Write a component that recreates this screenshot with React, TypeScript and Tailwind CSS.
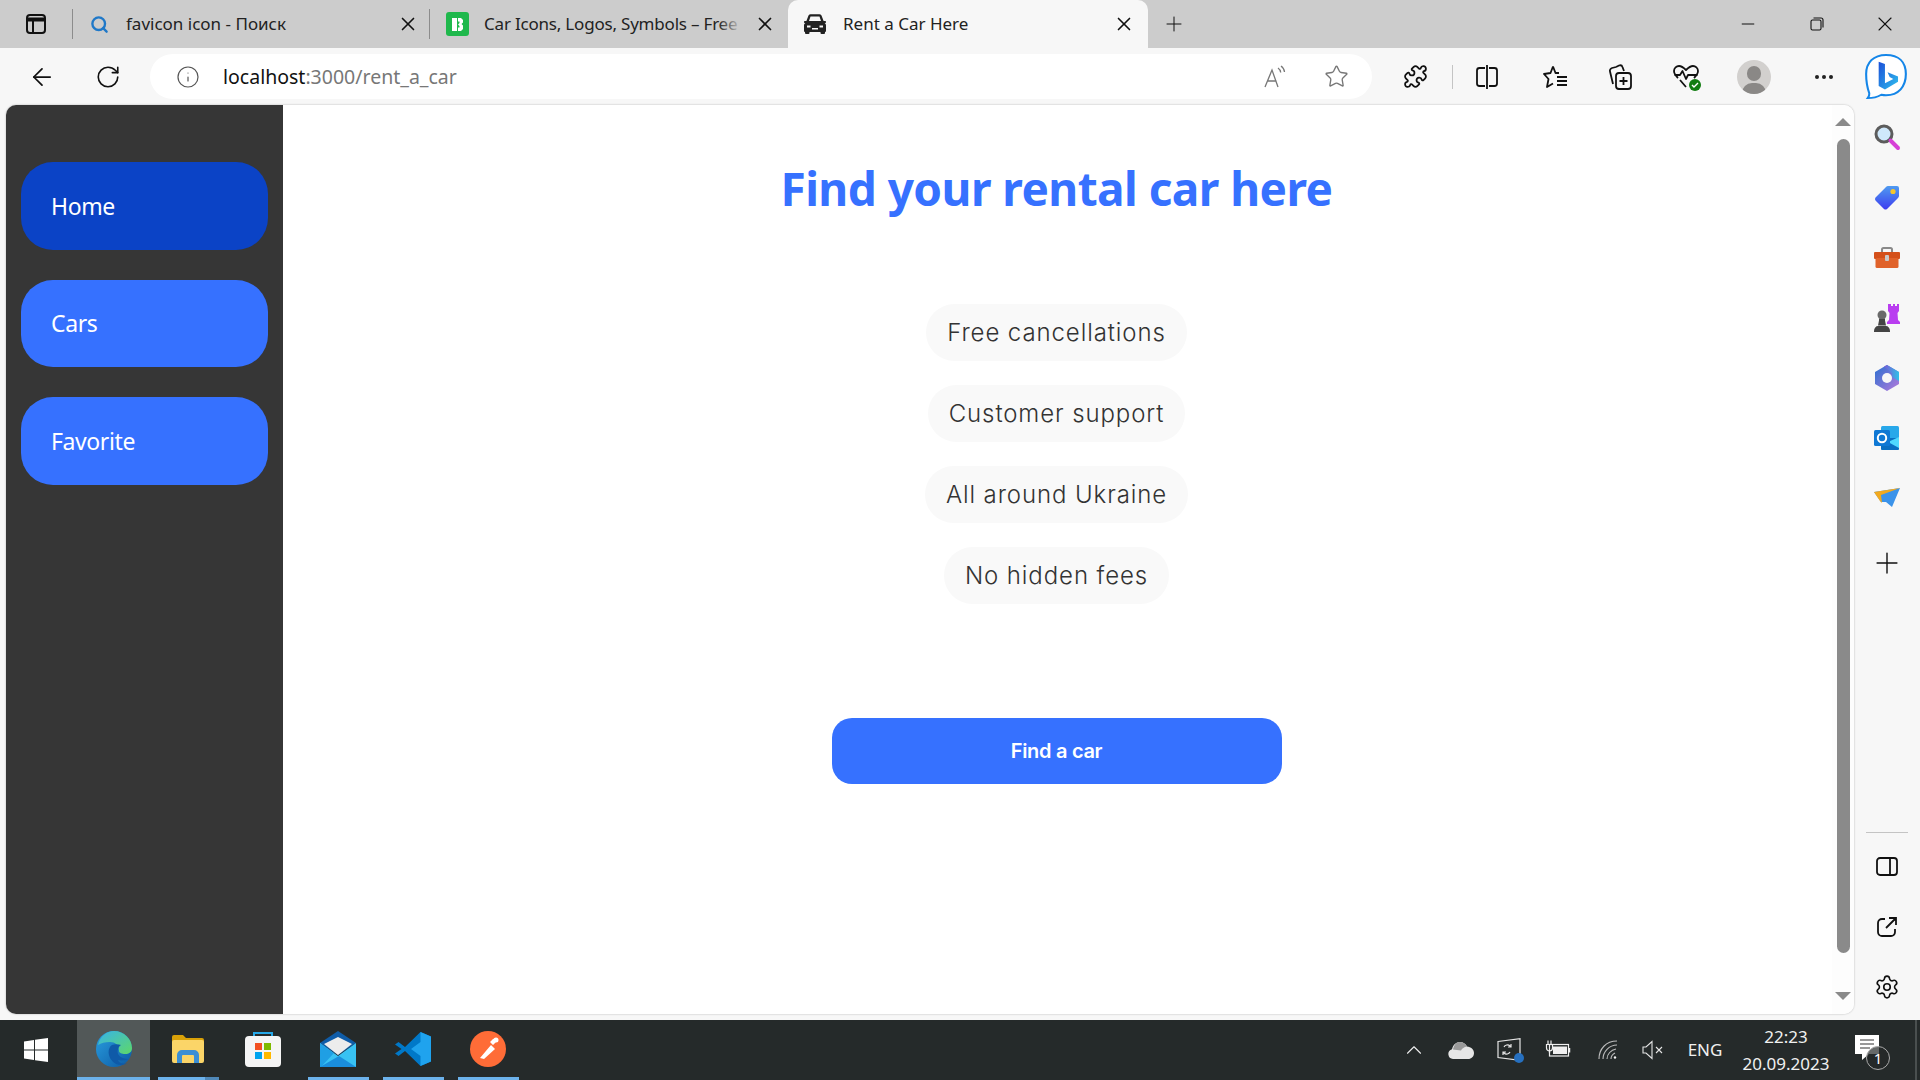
import { ArrowLeft, RotateCw, Info, Star, X, Plus, Minus, Search, ChevronUp, Settings, Puzzle } from 'lucide-react';
import type { ReactNode } from 'react';

const SEGOE = 'font-["Noto_Sans",sans-serif]';

// 사이드바 메뉴
const NAV_ITEMS = [
  { label: 'Home', active: true },
  { label: 'Cars', active: false },
  { label: 'Favorite', active: false },
];

const PERKS = ['Free cancellations', 'Customer support', 'All around Ukraine', 'No hidden fees'];

function Cell({ className = '', children }: { className?: string; children: ReactNode }) {
  return <div className={`flex items-center justify-center shrink-0 ${className}`}>{children}</div>;
}

function TabStripIcon() {
  return (
    <svg width="22" height="22" viewBox="0 0 22 22" fill="none" stroke="#111" strokeWidth="2">
      <rect x="2" y="2" width="18" height="18" rx="3" />
      <path d="M2 6.500h18" strokeWidth="4" />
      <path d="M8 7v13" />
    </svg>
  );
}

function CarFavicon() {
  return (
    <svg width="24" height="20" viewBox="0 0 24 20" fill="#222">
      <path d="M5.500 1.500C6 .7 6.800.3 7.600.3h8.800c.8 0 1.600.4 2.100 1.200L20.600 7H22c.6 0 1 .4 1 1s-.4 1-1 1h-.4c.9.6 1.400 1.500 1.400 2.600V17a1 1 0 0 1-1 1v1a1 1 0 0 1-1 1h-2.500a1 1 0 0 1-1-1v-1H6.500v1a1 1 0 0 1-1 1H3a1 1 0 0 1-1-1v-1a1 1 0 0 1-1-1v-5.400C1 10.500 1.500 9.600 2.400 9H2C1.400 9 1 8.600 1 8s.4-1 1-1h1.400L5.500 1.500zM7.500 2.500 6 7h12l-1.500-4.500h-9zM4 11.500v2h3.500v-2H4zm12.500 0v2H20v-2h-3.500zM9 14v1.500h6V14H9z" fillRule="evenodd" />
    </svg>
  );
}

function GreenFavicon() {
  return (
    <div className="w-[23px] h-[24px] rounded-[3px] bg-[#1fb84c] flex items-center justify-center">
      <svg width="13" height="15" viewBox="0 0 13 15" fill="#fff">
        <path d="M1 1h5v13H1zM7 1h3l2 2v2.500l-1.500 1.500L12 8.500V12l-2 2H7v-3.500h1.500V9L7 7.500 8.500 6V4.500H7z" />
      </svg>
    </div>
  );
}

function ReadAloudIcon() {
  return (
    <svg width="24" height="24" viewBox="0 0 24 24" fill="none" stroke="#777" strokeWidth="1.300">
      <path d="M2 22 9 5l6 17M4.500 16h9" />
      <path d="M15 3c1.500 1 2.500 2.500 2.700 4.500M18 1c2 1.500 3.300 3.500 3.500 6" />
    </svg>
  );
}

function SplitIcon() {
  return (
    <svg width="24" height="26" viewBox="0 0 24 26" fill="none" stroke="#111" strokeWidth="1.800">
      <path d="M10 4H4.500A2.500 2.500 0 0 0 2 6.500v13A2.500 2.500 0 0 0 4.500 22H10M14 4h5.500A2.500 2.500 0 0 1 22 6.500v13a2.500 2.500 0 0 1-2.500 2.500H14M12 1v24" />
    </svg>
  );
}

function FavoritesIcon() {
  return (
    <svg width="26" height="26" viewBox="0 0 26 26" fill="none" stroke="#111" strokeWidth="1.800" strokeLinejoin="round">
      <path d="M11 2.500 13.500 9H17M11 2.500 8.500 9 2 10l4.500 5-1.500 8 6-3.500" />
      <path d="M15 13h10M15 17h10M15 21h10" />
    </svg>
  );
}

function CollectionsIcon() {
  return (
    <svg width="26" height="28" viewBox="0 0 26 28" fill="none" stroke="#111" strokeWidth="1.800" strokeLinejoin="round">
      <rect x="9" y="10" width="15" height="16" rx="3" />
      <path d="M16.500 14v8M12.500 18h8" />
      <path d="M9 4 5 5c-1.500.5-2.500 2-2 3.500L6 21M9 4l3-1.500c1.500-.5 3 0 3.500 1.500l1.500 4" />
    </svg>
  );
}

function HeartPulseIcon() {
  return (
    <div className="relative w-[26px] h-[28px]">
      <svg width="26" height="26" viewBox="0 0 26 26" fill="none" stroke="#111" strokeWidth="1.800" strokeLinejoin="round">
        <path d="M5 15C2.500 12.500 1 11 1 8c0-3 2.500-5 5-5 2.500 0 4.500 1.500 7 4 2.500-2.500 4.500-4 7-4 2.500 0 5 2 5 5 0 3-1.500 4.500-4 7" />
        <path d="M1.500 12H7l2.500-4 3.500 8 2-4h9.500M7 17l6 7" />
      </svg>
      <div className="absolute right-[-2px] bottom-0 w-[12px] h-[12px] rounded-full bg-[#107c10] flex items-center justify-center">
        <svg width="8" height="8" viewBox="0 0 8 8" fill="none" stroke="#fff" strokeWidth="1.400"><path d="m1 4 2 2 4-4" /></svg>
      </div>
    </div>
  );
}

function AvatarIcon() {
  return (
    <div className="relative w-[34px] h-[34px] rounded-full bg-[#d2d0ce] overflow-hidden">
      <div className="absolute left-[10px] top-[6px] w-[14px] h-[15px] rounded-full bg-[#8a8886]" />
      <div className="absolute left-[5px] top-[23px] w-[24px] h-[20px] rounded-full bg-[#8a8886]" />
    </div>
  );
}

function BingIcon() {
  return (
    <svg width="46" height="48" viewBox="0 0 44 50" fill="none" preserveAspectRatio="none">
      <defs>
        <linearGradient id="bingB" x1="0" y1="0" x2="1" y2="1">
          <stop offset="0" stopColor="#1b4fd8" />
          <stop offset="1" stopColor="#2fc0ee" />
        </linearGradient>
      </defs>
      <path d="M22 2C10 2 3 10 3 22c0 8 1 14 3 20 .3 2-.5 3.500-1.500 5 5 0 9-1 13-3.500 1.500.3 3 .5 4.500.5 12 0 19-9 19-22S34 2 22 2z" fill="#fff" stroke="#1586e8" strokeWidth="2" />
      <path d="M15 9l6 2.500v20l8-4.500-3.500-2-2-5 10 4.500v5.500L21 38l-6-3.500z" fill="url(#bingB)" />
    </svg>
  );
}

function SearchToolIcon() {
  return (
    <svg width="28" height="28" viewBox="0 0 28 28" fill="none">
      <circle cx="11" cy="11" r="8" fill="#cfe8fb" stroke="#5c5c5c" strokeWidth="3" />
      <path d="M17.500 17.500 25 25" stroke="#d63fd6" strokeWidth="4" strokeLinecap="round" />
    </svg>
  );
}

function TagIcon() {
  return (
    <svg width="28" height="28" viewBox="0 0 28 28">
      <defs>
        <linearGradient id="tagG" x1="0" y1="0" x2="0" y2="1">
          <stop offset="0" stopColor="#4f9bf0" />
          <stop offset="1" stopColor="#3d3df0" />
        </linearGradient>
      </defs>
      <path d="M15 3h9a2 2 0 0 1 2 2v8a3 3 0 0 1-1 2L14 26a2.500 2.500 0 0 1-3 0l-8.500-8.500a2.500 2.500 0 0 1 0-3L13 4a3 3 0 0 1 2-1z" fill="url(#tagG)" />
      <circle cx="20" cy="8.500" r="2.600" fill="#f6c62c" />
    </svg>
  );
}

function ToolboxIcon() {
  return (
    <svg width="28" height="28" viewBox="0 0 28 28">
      <path d="M9 9V5.500A1.500 1.500 0 0 1 10.500 4h7A1.500 1.500 0 0 1 19 5.500V9" fill="none" stroke="#8a8a8a" strokeWidth="2" />
      <rect x="1" y="8" width="26" height="7" rx="1" fill="#d4501a" />
      <rect x="2.500" y="14" width="23" height="10" rx="1.500" fill="#e0622a" />
      <rect x="12" y="11" width="4" height="6" rx="1" fill="#c9c9c9" />
    </svg>
  );
}

function ChessIcon() {
  return (
    <svg width="30" height="30" viewBox="0 0 30 30">
      <path d="M18 2h2v2h2V2h2v2h2V2h2v7l-1.500 2 .5 7 2 2v2H16v-2l2-2 .5-7L17 9V2z" fill="#b93df0" transform="translate(-1 -1)" />
      <circle cx="10" cy="12" r="4.500" fill="#6a6a6a" />
      <path d="M7 16h6v1.500l1 5H6l1-5zM2 28c0-3 2-5 4-5h8c2 0 4 2 4 5v1H2z" fill="#444" />
    </svg>
  );
}

function M365Icon() {
  return (
    <svg width="28" height="28" viewBox="0 0 28 28">
      <defs>
        <linearGradient id="msA" x1="0" y1="0" x2="1" y2="0">
          <stop offset="0" stopColor="#7a5ad6" />
          <stop offset="1" stopColor="#2fc0e8" />
        </linearGradient>
        <linearGradient id="msB" x1="0" y1="0" x2="1" y2="1">
          <stop offset="0" stopColor="#2a6fd0" />
          <stop offset="1" stopColor="#b57bdc" />
        </linearGradient>
      </defs>
      <path d="M14 1 26 8v12l-12 7-12-7V8z" fill="url(#msB)" />
      <path d="M11 2.500 14 1l12 7v9l-7-4V9.500z" fill="url(#msA)" />
      <circle cx="14" cy="14" r="5" fill="#f7f7f7" />
    </svg>
  );
}

function OutlookIcon() {
  return (
    <svg width="28" height="28" viewBox="0 0 28 28">
      <rect x="8" y="2" width="18" height="24" rx="1.500" fill="#28a8ea" />
      <path d="M8 14h18v10.500a1.500 1.500 0 0 1-1.500 1.500h-15A1.500 1.500 0 0 1 8 24.500z" fill="#0a6fc2" />
      <path d="M26 13v11L15 18z" fill="#50d9ff" />
      <rect x="1" y="6" width="16" height="16" rx="1.500" fill="#0f78d4" />
      <circle cx="9" cy="14" r="4.200" fill="none" stroke="#fff" strokeWidth="2" />
    </svg>
  );
}

function PlaneIcon() {
  return (
    <svg width="28" height="24" viewBox="0 0 28 24">
      <path d="M1 7 27 3 19 22l-6-5-5 0z" fill="#3b93ea" />
      <path d="M1 7 27 3 8 10l1 8-2-2z" fill="#f2a91e" />
    </svg>
  );
}

function PanelIcon() {
  return (
    <svg width="24" height="22" viewBox="0 0 24 22" fill="none" stroke="#111" strokeWidth="1.800">
      <rect x="2" y="2" width="20" height="17" rx="3" />
      <path d="M15 2v17" />
    </svg>
  );
}

function PopOutIcon() {
  return (
    <svg width="22" height="22" viewBox="0 0 22 22" fill="none" stroke="#111" strokeWidth="1.800">
      <path d="M9 3H6a4 4 0 0 0-4 4v9a4 4 0 0 0 4 4h9a4 4 0 0 0 4-4v-3M10 12 20 2M13 2h7v7" />
    </svg>
  );
}

function WindowsLogo() {
  return (
    <svg width="24" height="24" viewBox="0 0 24 24" fill="#fff">
      <path d="M0 3.500 10 2v9.500H0zM11 1.800 24 0v11.500H11zM0 12.500h10V22L0 20.600zM11 12.500h13V24l-13-1.800z" />
    </svg>
  );
}

function EdgeLogo() {
  return (
    <svg width="36" height="36" viewBox="0 0 36 36">
      <defs>
        <linearGradient id="edgeA" x1="0" y1="0" x2="1" y2="1">
          <stop offset="0" stopColor="#2a9fe0" />
          <stop offset="1" stopColor="#0c59a4" />
        </linearGradient>
        <linearGradient id="edgeB" x1="0" y1="0" x2="1" y2="1">
          <stop offset="0" stopColor="#38b3e8" />
          <stop offset="1" stopColor="#5ed868" />
        </linearGradient>
      </defs>
      <circle cx="18" cy="18" r="18" fill="url(#edgeA)" />
      <path d="M2 14C4 5 11 0 18 0c10 0 18 8 18 17 0 4-3 6-7 6-3 0-6-1-6-3 0-6-4-9-9-9-5 0-9 1-12 3z" fill="url(#edgeB)" />
      <path d="M16 14c-3 2-4 6-3 10 1 5 6 10 12 10 2 0 4-.5 6-2-3 1-8 1-9-3 4 1 8 0 11-1-4 0-9-1-11-5-1-3 0-7 3-9-3-1-6-1-9 0z" fill="#0f5aa8" />
    </svg>
  );
}

function FolderLogo() {
  return (
    <svg width="32" height="28" viewBox="0 0 32 28">
      <path d="M0 2a2 2 0 0 1 2-2h9l3 3h16a2 2 0 0 1 2 2v3H0z" fill="#d9a108" />
      <rect y="5" width="32" height="23" rx="2" fill="#fbd568" />
      <path d="M5 28V20a5 5 0 0 1 5-5h12a5 5 0 0 1 5 5v8h-5v-7a1 1 0 0 0-1-1H11a1 1 0 0 0-1 1v7z" fill="#3c8fd4" />
    </svg>
  );
}

function StoreLogo() {
  return (
    <svg width="36" height="36" viewBox="0 0 36 36">
      <path d="M9 5V2h18v3" fill="none" stroke="#25a8e8" strokeWidth="2" />
      <rect y="5" width="36" height="31" rx="4" fill="#f5f5f5" />
      <rect x="10" y="12" width="7" height="7" fill="#f25022" />
      <rect x="19" y="12" width="7" height="7" fill="#7fba00" />
      <rect x="10" y="21" width="7" height="7" fill="#00a4ef" />
      <rect x="19" y="21" width="7" height="7" fill="#ffb900" />
    </svg>
  );
}

function MailLogo() {
  return (
    <svg width="36" height="36" viewBox="0 0 36 36">
      <path d="M0 12 18 0l18 12-18 12z" fill="#0f5ca8" />
      <path d="M4 13 18 6l14 7-14 11z" fill="#ececec" />
      <path d="M0 12l18 13L36 12v24H0z" fill="#38c2f3" />
      <path d="M0 12v24h1l13-14z" fill="#1f9fe4" />
      <path d="M0 36 19 25l17 11z" fill="#1a8edc" />
    </svg>
  );
}

function VsCodeLogo() {
  return (
    <svg width="36" height="36" viewBox="0 0 36 36">
      <path d="M25.500 1 36 5.500v25L25.500 35 10 20l-6.500 5L0 22.500 6.500 18 0 13.500 3.500 11l6.500 5z" fill="#0078c8" />
      <path d="M25.500 1 36 5.500v25L25.500 35V25L16 18l9.500-7z" fill="#1fa3ee" />
    </svg>
  );
}

function PostmanLogo() {
  return (
    <svg width="36" height="36" viewBox="0 0 36 36">
      <circle cx="18" cy="18" r="18" fill="#ff6c37" />
      <path d="M10 27 21 14l4 4-11 10zM23 8l4-1-1 4-3 3-3-3z" fill="#fff" />
      <circle cx="26" cy="9" r="2.500" fill="#fff" />
    </svg>
  );
}

function OneDriveIcon() {
  return (
    <svg width="26" height="18" viewBox="0 0 26 18">
      <path d="M5 18a5 5 0 0 1-1-9.800C5 4 8 1 12 1c3 0 5.500 1.500 7 4.500 4 .3 7 3 7 6.500s-2.500 6-6 6z" fill="#e6e6e6" />
      <path d="M12 1c3 0 5.500 1.500 7 4.500-3 .5-5 2-6 4L5 8.500C6 4 8 1 12 1z" fill="#9a9a9a" />
    </svg>
  );
}

function SyncTrayIcon() {
  return (
    <div className="relative w-[26px] h-[24px]">
      <svg width="24" height="23" viewBox="0 0 24 23" fill="none" stroke="#e6e6e6" strokeWidth="1.200">
        <path d="M1 3.500 23 .7v21.600L1 19.500zM7 9c1-2 4-3 6-1l1 1M14 6v3h-3M13 14c-1 2-4 3-6 1l-1-1M6 17v-3h3" />
      </svg>
      <div className="absolute right-[-1px] bottom-[-1px] w-[10px] h-[10px] rounded-full bg-[#2670c0]" />
    </div>
  );
}

function BatteryTrayIcon() {
  return (
    <svg width="26" height="20" viewBox="0 0 26 20" fill="none" stroke="#f0f0f0" strokeWidth="1.200">
      <path d="M3 .5v4M6 .5v4M1.500 4.500h6V8a3 3 0 0 1-6 0zM4.500 11v2" />
      <rect x="4.500" y="4.500" width="19" height="11.500" />
      <rect x="8" y="6.500" width="14" height="7.500" fill="#f0f0f0" stroke="none" />
      <path d="M24.500 8v4.500" strokeWidth="1.500" />
    </svg>
  );
}

function WifiTrayIcon() {
  return (
    <svg width="20" height="20" viewBox="0 0 20 20" fill="none" stroke="#bdbdbd" strokeWidth="1.100">
      <path d="M1 19C1 9 8 1 19 1M5 19C5 12 11 5 19 5M9 19c0-5 4-9 9-10M13 19c0-3 2-5 4-6" />
      <circle cx="17" cy="17.500" r="1.200" fill="#f0f0f0" stroke="none" />
    </svg>
  );
}

function MuteTrayIcon() {
  return (
    <svg width="22" height="20" viewBox="0 0 22 20" fill="none" stroke="#e6e6e6" strokeWidth="1.100">
      <path d="M1 7v6h3l6 5.500V1.500L4 7zM14 7l6 6M20 7l-6 6" />
    </svg>
  );
}

function NotificationIcon() {
  return (
    <div className="relative w-[30px] h-[30px]">
      <svg width="24" height="26" viewBox="0 0 24 26" fill="#fff" className="absolute left-0 top-0">
        <path d="M0 0h24v19h-10l-7 6v-6H0z" />
        <path d="M5 5h14M5 9h14M5 13h10" stroke="#333" strokeWidth="1.200" />
      </svg>
      <div className="absolute left-[11px] top-[11px] w-[24px] h-[24px] rounded-full border border-[#aaa] bg-[#252a2a]/70 flex items-center justify-center text-white text-[15px] font-['Noto_Sans',sans-serif]">
        1
      </div>
    </div>
  );
}

function TaskItem({ underline = false, active = false, split = false, children }: { underline?: boolean; active?: boolean; split?: boolean; children: ReactNode }) {
  return (
    <div className={`flex flex-col items-center h-full shrink-0 ${active ? 'bg-[#525858] w-[73px]' : 'w-[61px]'}`}>
      <div className={`flex-1 flex items-center justify-center ${active ? '' : 'pr-[2px]'}`}>{children}</div>
      <div className={`flex w-full h-[3px] ${underline ? 'bg-[#6cb2eb]' : ''}`}>
        {split && <div className="ml-auto w-[14px] bg-[#4f88b8]" />}
      </div>
    </div>
  );
}

export default function App() {
  return (
    <div className={`w-[1920px] h-[1080px] flex flex-col overflow-hidden bg-[#f7f7f7] ${SEGOE}`}>
      {/* 탭 바 */}
      <div className="h-12 bg-[#cccccc] flex items-center text-[17px] text-[#222] shrink-0">
        <Cell className="w-[72px]"><TabStripIcon /></Cell>
        <div className="w-px h-[30px] bg-[#8c8c8c]" />
        <Cell className="ml-[14px] w-6"><Search size={19} strokeWidth={3} color="#1f78c8" /></Cell>
        <div className="ml-[15px] w-[271px] whitespace-nowrap">favicon icon - Поиск</div>
        <Cell className="w-6 ml-[-1px]"><X size={22} strokeWidth={1.8} color="#111" /></Cell>
        <div className="ml-[9px] w-px h-[30px] bg-[#8c8c8c]" />
        <div className="ml-[16px]"><GreenFavicon /></div>
        <div className="relative ml-[15px] w-[258px] whitespace-nowrap overflow-hidden tracking-[-0.2px]">
          Car Icons, Logos, Symbols – Free
          <div className="absolute right-0 top-0 h-full w-6 bg-gradient-to-r from-transparent to-[#cccccc]" />
        </div>
        <Cell className="w-6 ml-[11px]"><X size={22} strokeWidth={1.8} color="#111" /></Cell>
        <div className="ml-[11px] w-[360px] self-stretch bg-[#f7f7f7] rounded-t-[10px] flex items-center">
          <div className="ml-[15px]"><CarFavicon /></div>
          <div className="ml-[16px] w-[269px] whitespace-nowrap">Rent a Car Here</div>
          <Cell className="w-6"><X size={22} strokeWidth={1.8} color="#111" /></Cell>
        </div>
        <Cell className="w-6 ml-[14px]"><Plus size={36} strokeWidth={1} color="#111" /></Cell>
        <Cell className="w-6 ml-auto"><Minus size={20} strokeWidth={1.2} color="#111" /></Cell>
        <Cell className="w-6 ml-[45px]">
          <svg width="14" height="14" viewBox="0 0 14 14" fill="none" stroke="#111" strokeWidth="1.100">
            <rect x="1" y="3" width="10" height="10" rx="1.500" />
            <path d="M3.500 1H11a2 2 0 0 1 2 2v7.500" />
          </svg>
        </Cell>
        <Cell className="w-6 ml-[44px] mr-[23px]"><X size={24} strokeWidth={1.1} color="#111" /></Cell>
      </div>

      {/* 주소창 & 툴바 */}
      <div className="h-[57px] flex items-center shrink-0">
        <Cell className="w-[84px]"><ArrowLeft size={28} strokeWidth={1.5} color="#111" /></Cell>
        <Cell className="w-12"><RotateCw size={26} strokeWidth={1.5} color="#111" /></Cell>
        <div className="ml-[18px] w-[1222px] h-[45px] bg-white rounded-full flex items-center">
          <Cell className="ml-[26px] w-6"><Info size={24} strokeWidth={1.2} color="#555" /></Cell>
          <div className="ml-[23px] text-[19.500px] text-[#777] whitespace-nowrap"><span className="text-[#111]">localhost</span>:3000/rent_a_car</div>
          <Cell className="ml-auto w-10"><ReadAloudIcon /></Cell>
          <Cell className="ml-[21px] mr-4 w-10"><Star size={25} strokeWidth={1.3} color="#777" /></Cell>
        </div>
        <Cell className="ml-[23px] w-10"><Puzzle size={25} strokeWidth={1.7} color="#111" /></Cell>
        <div className="ml-[17px] w-px h-6 bg-[#c4c4c4]" />
        <Cell className="ml-[14px] w-10"><SplitIcon /></Cell>
        <Cell className="ml-7 w-10"><FavoritesIcon /></Cell>
        <Cell className="ml-[25px] w-10"><CollectionsIcon /></Cell>
        <Cell className="ml-[26px] w-10"><HeartPulseIcon /></Cell>
        <Cell className="ml-7 w-10"><AvatarIcon /></Cell>
        <Cell className="ml-[30px] w-10 gap-[3px]">
          <span className="w-[4px] h-[4px] rounded-full bg-[#222]" />
          <span className="w-[4px] h-[4px] rounded-full bg-[#222]" />
          <span className="w-[4px] h-[4px] rounded-full bg-[#222]" />
        </Cell>
        <Cell className="ml-[19px] w-[46px]"><BingIcon /></Cell>
      </div>

      {/* 본문 */}
      <div className="h-[915px] flex shrink-0 pl-[6px]">
        <div className="w-[1848px] h-[909px] flex rounded-[10px] overflow-hidden bg-white shadow-[0_0_2px_rgba(0,0,0,0.3)]">
          {/* 사이드바 */}
          <aside className="w-[277px] bg-[#363636] flex flex-col gap-[30px] pt-[57px] px-[15px]">
            {NAV_ITEMS.map(item => (
              <div
                key={item.label}
                className={`h-[87.500px] rounded-[32px] flex items-center pl-[30px] text-[23px] tracking-[-0.4px] text-white ${item.active ? 'bg-[#0b43c6]' : 'bg-[#3671ff]'}`}
              >
                {item.label}
              </div>
            ))}
          </aside>

          {/* 메인 */}
          <main className="flex-1 flex flex-col items-center pt-[51px] pr-[2px]">
            <h1 className="h-16 flex items-center text-[46px] font-bold text-[#3671ff] tracking-[-0.55px] whitespace-nowrap">
              Find your rental car here
            </h1>
            <div className="mt-[84px] flex flex-col items-center gap-6">
              {PERKS.map(perk => (
                <div
                  key={perk}
                  className="h-[57px] px-[21px] rounded-full bg-[#f9f9f9] flex items-center font-['Inter',sans-serif] font-light text-[24px] tracking-[0.9px] text-[#333] whitespace-nowrap"
                >
                  {perk}
                </div>
              ))}
            </div>
            <button className="mt-[114px] w-[450px] h-[66px] rounded-[20px] bg-[#3671ff] text-white text-[20px] font-semibold font-['Inter',sans-serif] tracking-[-0.3px]">
              Find a car
            </button>
          </main>

          {/* 스크롤바 */}
          <div className="w-[22px] flex flex-col items-center bg-[#fdfdfd]">
            <div className="mt-[13px] w-0 h-0 border-x-[8px] border-x-transparent border-b-[8px] border-b-[#8a8a8a]" />
            <div className="mt-[13px] w-[13px] h-[814px] rounded-full bg-[#8a8a8a]" />
            <div className="mt-[39px] w-0 h-0 border-x-[8px] border-x-transparent border-t-[8px] border-t-[#8a8a8a]" />
          </div>
        </div>

        {/* 오른쪽 도구 모음 */}
        <div className="w-[66px] h-[909px] flex flex-col items-center pt-[18px]">
          <Cell className="h-7"><SearchToolIcon /></Cell>
          <Cell className="h-7 mt-8"><TagIcon /></Cell>
          <Cell className="h-7 mt-[33px]"><ToolboxIcon /></Cell>
          <Cell className="h-7 mt-8"><ChessIcon /></Cell>
          <Cell className="h-7 mt-8"><M365Icon /></Cell>
          <Cell className="h-7 mt-8"><OutlookIcon /></Cell>
          <Cell className="h-7 mt-[31px]"><PlaneIcon /></Cell>
          <Cell className="h-7 mt-[38px]"><Plus size={34} strokeWidth={1} color="#111" /></Cell>
          <div className="mt-auto w-[42px] h-px bg-[#c4c4c4]" />
          <Cell className="h-6 mt-[22px]"><PanelIcon /></Cell>
          <Cell className="h-6 mt-9"><PopOutIcon /></Cell>
          <Cell className="h-6 mt-9 mb-[15px]"><Settings size={26} strokeWidth={1.5} color="#111" /></Cell>
        </div>
      </div>

      {/* 작업 표시줄 */}
      <div className="h-[60px] bg-[#252a2a] flex items-center shrink-0 text-[#f0f0f0]">
        <Cell className="w-[71px] mr-[6px]"><WindowsLogo /></Cell>
        <TaskItem active underline><EdgeLogo /></TaskItem>
        <div className="ml-2 flex h-full gap-[14px]">
          <TaskItem underline split><FolderLogo /></TaskItem>
          <TaskItem><StoreLogo /></TaskItem>
          <TaskItem underline><MailLogo /></TaskItem>
          <TaskItem underline><VsCodeLogo /></TaskItem>
          <TaskItem underline><PostmanLogo /></TaskItem>
        </div>
        <Cell className="ml-auto w-10"><ChevronUp size={26} strokeWidth={1} color="#eee" /></Cell>
        <Cell className="ml-[7px] w-10"><OneDriveIcon /></Cell>
        <Cell className="ml-[9px] w-10"><SyncTrayIcon /></Cell>
        <Cell className="ml-2 w-10"><BatteryTrayIcon /></Cell>
        <Cell className="ml-[10px] w-10"><WifiTrayIcon /></Cell>
        <Cell className="ml-[5px] w-10"><MuteTrayIcon /></Cell>
        <Cell className="ml-[7px] w-[50px] text-[17px]">ENG</Cell>
        <div className="ml-[6px] w-[100px] flex flex-col items-center text-[17px] leading-[27px]">
          <span>22:23</span>
          <span>20.09.2023</span>
        </div>
        <Cell className="ml-[14px] w-10"><NotificationIcon /></Cell>
        <div className="ml-[25px] w-[2px] h-full bg-[#4a4f4f]" />
        <div className="w-[3px]" />
      </div>
    </div>
  );
}
